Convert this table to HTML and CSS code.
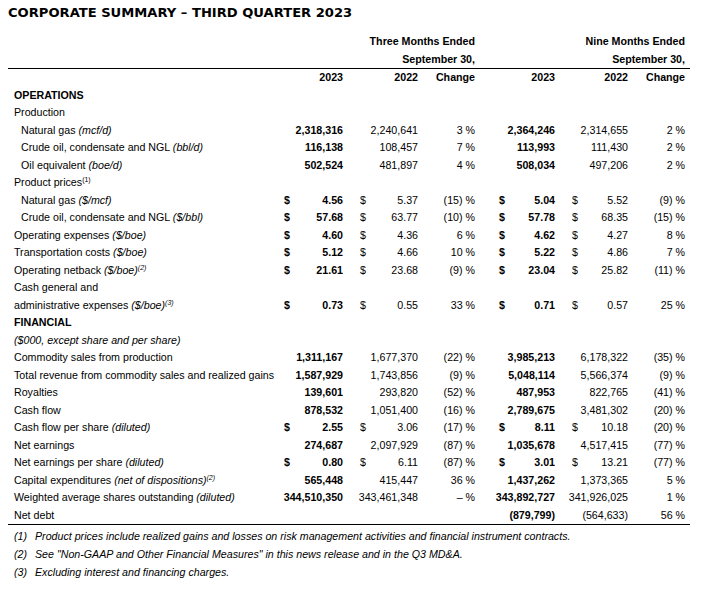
FILE: index.html
```html
<!DOCTYPE html>
<html lang="en">
<head>
<meta charset="utf-8">
<title>Corporate Summary – Third Quarter 2023</title>
<link rel="stylesheet" href="styles.css">
</head>
<body>
<h1 class="title">CORPORATE SUMMARY – THIRD QUARTER 2023</h1>
<table class="summary">
  <colgroup>
    <col class="c-label">
    <col class="c-dA">
    <col class="c-vA">
    <col class="c-dB">
    <col class="c-vB">
    <col class="c-chg">
    <col class="c-dC">
    <col class="c-vC">
    <col class="c-dD">
    <col class="c-vD">
    <col class="c-chg">
    <col class="c-end">
  </colgroup>
  <tbody>
    <tr class="hd">
      <td></td><td colspan="5" class="r">Three Months Ended</td>
      <td colspan="5" class="r">Nine Months Ended</td><td></td>
    </tr>
    <tr class="hd rule">
      <td></td><td colspan="5" class="r">September 30,</td>
      <td colspan="5" class="r">September 30,</td><td></td>
    </tr>
    <tr class="hd">
      <td></td><td colspan="2" class="r">2023</td><td colspan="2" class="r">2022</td><td class="r">Change</td>
      <td colspan="2" class="r">2023</td><td colspan="2" class="r">2022</td><td class="r">Change</td><td></td>
    </tr>
    <tr><td class="lbl sec" colspan="12">OPERATIONS</td></tr>
    <tr><td class="lbl" colspan="12">Production</td></tr>
    <tr>
      <td class="lbl ind">Natural gas <i>(mcf/d)</i></td>
      <td colspan="2" class="v b">2,318,316</td><td colspan="2" class="v">2,240,641</td><td class="v">3 %</td>
      <td colspan="2" class="v b">2,364,246</td><td colspan="2" class="v">2,314,655</td><td class="v">2 %</td><td></td>
    </tr>
    <tr>
      <td class="lbl ind">Crude oil, condensate and NGL <i>(bbl/d)</i></td>
      <td colspan="2" class="v b">116,138</td><td colspan="2" class="v">108,457</td><td class="v">7 %</td>
      <td colspan="2" class="v b">113,993</td><td colspan="2" class="v">111,430</td><td class="v">2 %</td><td></td>
    </tr>
    <tr>
      <td class="lbl ind">Oil equivalent <i>(boe/d)</i></td>
      <td colspan="2" class="v b">502,524</td><td colspan="2" class="v">481,897</td><td class="v">4 %</td>
      <td colspan="2" class="v b">508,034</td><td colspan="2" class="v">497,206</td><td class="v">2 %</td><td></td>
    </tr>
    <tr><td class="lbl" colspan="12">Product prices<span class="sup">(1)</span></td></tr>
    <tr>
      <td class="lbl ind">Natural gas <i>($/mcf)</i></td>
      <td class="d dA b">$</td><td class="v b">4.56</td><td class="d dB">$</td><td class="v">5.37</td><td class="v">(15) %</td>
      <td class="d dC b">$</td><td class="v b">5.04</td><td class="d dD">$</td><td class="v">5.52</td><td class="v">(9) %</td><td></td>
    </tr>
    <tr>
      <td class="lbl ind">Crude oil, condensate and NGL <i>($/bbl)</i></td>
      <td class="d dA b">$</td><td class="v b">57.68</td><td class="d dB">$</td><td class="v">63.77</td><td class="v">(10) %</td>
      <td class="d dC b">$</td><td class="v b">57.78</td><td class="d dD">$</td><td class="v">68.35</td><td class="v">(15) %</td><td></td>
    </tr>
    <tr>
      <td class="lbl">Operating expenses <i>($/boe)</i></td>
      <td class="d dA b">$</td><td class="v b">4.60</td><td class="d dB">$</td><td class="v">4.36</td><td class="v">6 %</td>
      <td class="d dC b">$</td><td class="v b">4.62</td><td class="d dD">$</td><td class="v">4.27</td><td class="v">8 %</td><td></td>
    </tr>
    <tr>
      <td class="lbl">Transportation costs <i>($/boe)</i></td>
      <td class="d dA b">$</td><td class="v b">5.12</td><td class="d dB">$</td><td class="v">4.66</td><td class="v">10 %</td>
      <td class="d dC b">$</td><td class="v b">5.22</td><td class="d dD">$</td><td class="v">4.86</td><td class="v">7 %</td><td></td>
    </tr>
    <tr>
      <td class="lbl">Operating netback <i>($/boe)<span class="sup">(2)</span></i></td>
      <td class="d dA b">$</td><td class="v b">21.61</td><td class="d dB">$</td><td class="v">23.68</td><td class="v">(9) %</td>
      <td class="d dC b">$</td><td class="v b">23.04</td><td class="d dD">$</td><td class="v">25.82</td><td class="v">(11) %</td><td></td>
    </tr>
    <tr><td class="lbl" colspan="12">Cash general and</td></tr>
    <tr>
      <td class="lbl">administrative expenses <i>($/boe)<span class="sup">(3)</span></i></td>
      <td class="d dA b">$</td><td class="v b">0.73</td><td class="d dB">$</td><td class="v">0.55</td><td class="v">33 %</td>
      <td class="d dC b">$</td><td class="v b">0.71</td><td class="d dD">$</td><td class="v">0.57</td><td class="v">25 %</td><td></td>
    </tr>
    <tr><td class="lbl sec" colspan="12">FINANCIAL</td></tr>
    <tr><td class="lbl" colspan="12"><i>($000, except share and per share)</i></td></tr>
    <tr>
      <td class="lbl">Commodity sales from production</td>
      <td colspan="2" class="v b">1,311,167</td><td colspan="2" class="v">1,677,370</td><td class="v">(22) %</td>
      <td colspan="2" class="v b">3,985,213</td><td colspan="2" class="v">6,178,322</td><td class="v">(35) %</td><td></td>
    </tr>
    <tr>
      <td class="lbl">Total revenue from commodity sales and realized gains</td>
      <td colspan="2" class="v b">1,587,929</td><td colspan="2" class="v">1,743,856</td><td class="v">(9) %</td>
      <td colspan="2" class="v b">5,048,114</td><td colspan="2" class="v">5,566,374</td><td class="v">(9) %</td><td></td>
    </tr>
    <tr>
      <td class="lbl">Royalties</td>
      <td colspan="2" class="v b">139,601</td><td colspan="2" class="v">293,820</td><td class="v">(52) %</td>
      <td colspan="2" class="v b">487,953</td><td colspan="2" class="v">822,765</td><td class="v">(41) %</td><td></td>
    </tr>
    <tr>
      <td class="lbl">Cash flow</td>
      <td colspan="2" class="v b">878,532</td><td colspan="2" class="v">1,051,400</td><td class="v">(16) %</td>
      <td colspan="2" class="v b">2,789,675</td><td colspan="2" class="v">3,481,302</td><td class="v">(20) %</td><td></td>
    </tr>
    <tr>
      <td class="lbl">Cash flow per share <i>(diluted)</i></td>
      <td class="d dA b">$</td><td class="v b">2.55</td><td class="d dB">$</td><td class="v">3.06</td><td class="v">(17) %</td>
      <td class="d dC b">$</td><td class="v b">8.11</td><td class="d dD">$</td><td class="v">10.18</td><td class="v">(20) %</td><td></td>
    </tr>
    <tr>
      <td class="lbl">Net earnings</td>
      <td colspan="2" class="v b">274,687</td><td colspan="2" class="v">2,097,929</td><td class="v">(87) %</td>
      <td colspan="2" class="v b">1,035,678</td><td colspan="2" class="v">4,517,415</td><td class="v">(77) %</td><td></td>
    </tr>
    <tr>
      <td class="lbl">Net earnings per share <i>(diluted)</i></td>
      <td class="d dA b">$</td><td class="v b">0.80</td><td class="d dB">$</td><td class="v">6.11</td><td class="v">(87) %</td>
      <td class="d dC b">$</td><td class="v b">3.01</td><td class="d dD">$</td><td class="v">13.21</td><td class="v">(77) %</td><td></td>
    </tr>
    <tr>
      <td class="lbl">Capital expenditures <i>(net of dispositions)<span class="sup">(2)</span></i></td>
      <td colspan="2" class="v b">565,448</td><td colspan="2" class="v">415,447</td><td class="v">36 %</td>
      <td colspan="2" class="v b">1,437,262</td><td colspan="2" class="v">1,373,365</td><td class="v">5 %</td><td></td>
    </tr>
    <tr>
      <td class="lbl">Weighted average shares outstanding <i>(diluted)</i></td>
      <td colspan="2" class="v b">344,510,350</td><td colspan="2" class="v">343,461,348</td><td class="v">– %</td>
      <td colspan="2" class="v b">343,892,727</td><td colspan="2" class="v">341,926,025</td><td class="v">1 %</td><td></td>
    </tr>
    <tr class="rule">
      <td class="lbl">Net debt</td>
      <td colspan="2"></td><td colspan="2"></td><td></td>
      <td colspan="2" class="v b">(879,799)</td><td colspan="2" class="v">(564,633)</td><td class="v">56 %</td><td></td>
    </tr>
  </tbody>
</table>
<ol class="notes">
  <li><span class="num">(1)</span>Product prices include realized gains and losses on risk management activities and financial instrument contracts.</li>
  <li><span class="num">(2)</span>See "Non-GAAP and Other Financial Measures" in this news release and in the Q3 MD&amp;A.</li>
  <li><span class="num">(3)</span>Excluding interest and financing charges.</li>
</ol>
</body>
</html>
```

FILE: styles.css
```css
html, body {
  background: #ffffff;
}
body {
  margin: 0;
  padding: 5px 8px 0 8px;
  font-family: "Liberation Sans", Arial, sans-serif;
  font-size: 10.67px;
  color: #000000;
}
.title {
  margin: 0 0 12px 0;
  font-family: "DejaVu Sans", Verdana, sans-serif;
  font-weight: bold;
  font-size: 13.1px;
  line-height: 16px;
  letter-spacing: 0;
}
.summary {
  border-collapse: collapse;
  table-layout: fixed;
  width: 682px;
}
.c-label { width: 275px; }
.c-dA { width: 12px; }
.c-vA { width: 48px; }
.c-dB { width: 29px; }
.c-vB { width: 46px; }
.c-chg { width: 57px; }
.c-dC { width: 35px; }
.c-vC { width: 45px; }
.c-dD { width: 27px; }
.c-vD { width: 46px; }
.c-end { width: 5px; }
.summary td {
  padding: 0;
  height: 17.5px;
  line-height: 17.5px;
  white-space: nowrap;
  vertical-align: middle;
}
.summary .rule td {
  border-bottom: 1.5px solid #000000;
}
.hd td {
  font-weight: bold;
}
.r, .v {
  text-align: right;
}
.b {
  font-weight: bold;
}
.lbl {
  padding-left: 6px !important;
}
.lbl.ind {
  padding-left: 13px !important;
}
.sec {
  font-weight: bold;
}
.d {
  text-align: left;
}
.dA { padding-left: 1px !important; }
.dB { padding-left: 17px !important; }
.dC { padding-left: 24px !important; }
.dD { padding-left: 17px !important; }
.sup {
  font-size: 7px;
  vertical-align: 4px;
  line-height: 0;
}
.notes {
  list-style: none;
  margin: 0;
  padding: 2px 0 0 6px;
  font-style: italic;
}
.notes li {
  line-height: 18px;
  display: flex;
}
.notes .num {
  width: 21px;
  flex: none;
}
```
